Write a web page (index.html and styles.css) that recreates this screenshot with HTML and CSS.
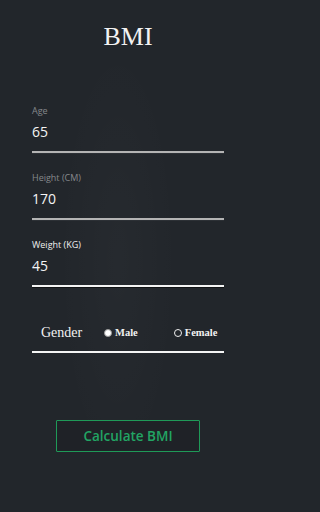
FILE: index.html
```html
<!DOCTYPE html>
<html>
<head>
<meta charset="utf-8">
<link rel="stylesheet" href="styles.css">
</head>
<body>
<div class="screen">
  <h1 class="title">BMI</h1>
  <div class="form">
    <div class="field">
      <div class="label">Age</div>
      <div class="value line-gray">65</div>
    </div>
    <div class="field">
      <div class="label">Height (CM)</div>
      <div class="value line-gray">170</div>
    </div>
    <div class="field">
      <div class="label label-active">Weight (KG)</div>
      <div class="value line-white">45</div>
    </div>
    <div class="gender">
      <span class="gender-label">Gender</span>
      <span class="option option-male"><span class="radio radio-on"></span>Male</span>
      <span class="option option-female"><span class="radio"></span>Female</span>
    </div>
  </div>
  <div class="actions">
    <button class="calc">Calculate BMI</button>
  </div>
</div>
</body>
</html>
```
FILE: styles.css
```css
html, body {
  margin: 0;
  padding: 0;
}
body {
  width: 256px;
  height: 512px;
  background: #22262b;
  overflow: hidden;
}
.screen {
  height: 512px;
  padding-top: 22px;
  box-sizing: border-box;
  background:
    radial-gradient(ellipse 60px 220px at 118px 260px, rgba(255,255,255,0.018), rgba(255,255,255,0) 100%),
    #22262b;
}
.title {
  margin: 0;
  font-family: "Liberation Serif", serif;
  font-weight: normal;
  font-size: 26px;
  line-height: 30px;
  color: #f2f2f2;
  text-align: center;
}
.form {
  margin-top: 53px;
  padding: 0 32px;
}
.field {
  margin-bottom: 19px;
}
.label {
  font-family: "Open Sans", sans-serif;
  font-size: 9px;
  line-height: 12px;
  color: #85888c;
}
.label-active {
  color: #eeeeee;
}
.value {
  margin-top: 5px;
  font-family: "Open Sans", sans-serif;
  font-size: 14px;
  line-height: 20px;
  color: #f4f4f4;
  padding-bottom: 9px;
}
.line-gray {
  border-bottom: 2px solid #b4b4b4;
  box-shadow: 0 1px 0 #2c3035;
}
.line-white {
  border-bottom: 2px solid #f4f4f4;
  box-shadow: 0 1px 0 #111315;
}
.gender {
  margin-top: 36px;
  display: flex;
  align-items: center;
  height: 20px;
  padding-bottom: 8px;
  padding-left: 9px;
  border-bottom: 2px solid #f4f4f4;
  font-family: "Liberation Serif", serif;
  color: #f2f2f2;
}
.gender-label {
  font-size: 14px;
  line-height: 20px;
  width: 40px;
}
.option {
  display: flex;
  align-items: center;
  font-size: 10.5px;
  font-weight: bold;
  line-height: 20px;
}
.option-male {
  margin-left: 23px;
}
.option-female {
  margin-left: 36px;
}
.radio {
  width: 8px;
  height: 8px;
  box-sizing: border-box;
  border-radius: 50%;
  border: 1px solid #eeeeee;
  margin-right: 3px;
}
.radio-on {
  background: #ffffff;
  border: 1px solid #9a9a9a;
}
.actions {
  display: flex;
  justify-content: center;
  margin-top: 67px;
}
.calc {
  width: 144px;
  height: 32px;
  box-sizing: border-box;
  background: #1f2227;
  border: 1px solid #1f9a58;
  border-radius: 1px;
  color: #22a564;
  font-family: "Open Sans", sans-serif;
  font-weight: 600;
  font-size: 13.5px;
  padding: 0;
}
```
